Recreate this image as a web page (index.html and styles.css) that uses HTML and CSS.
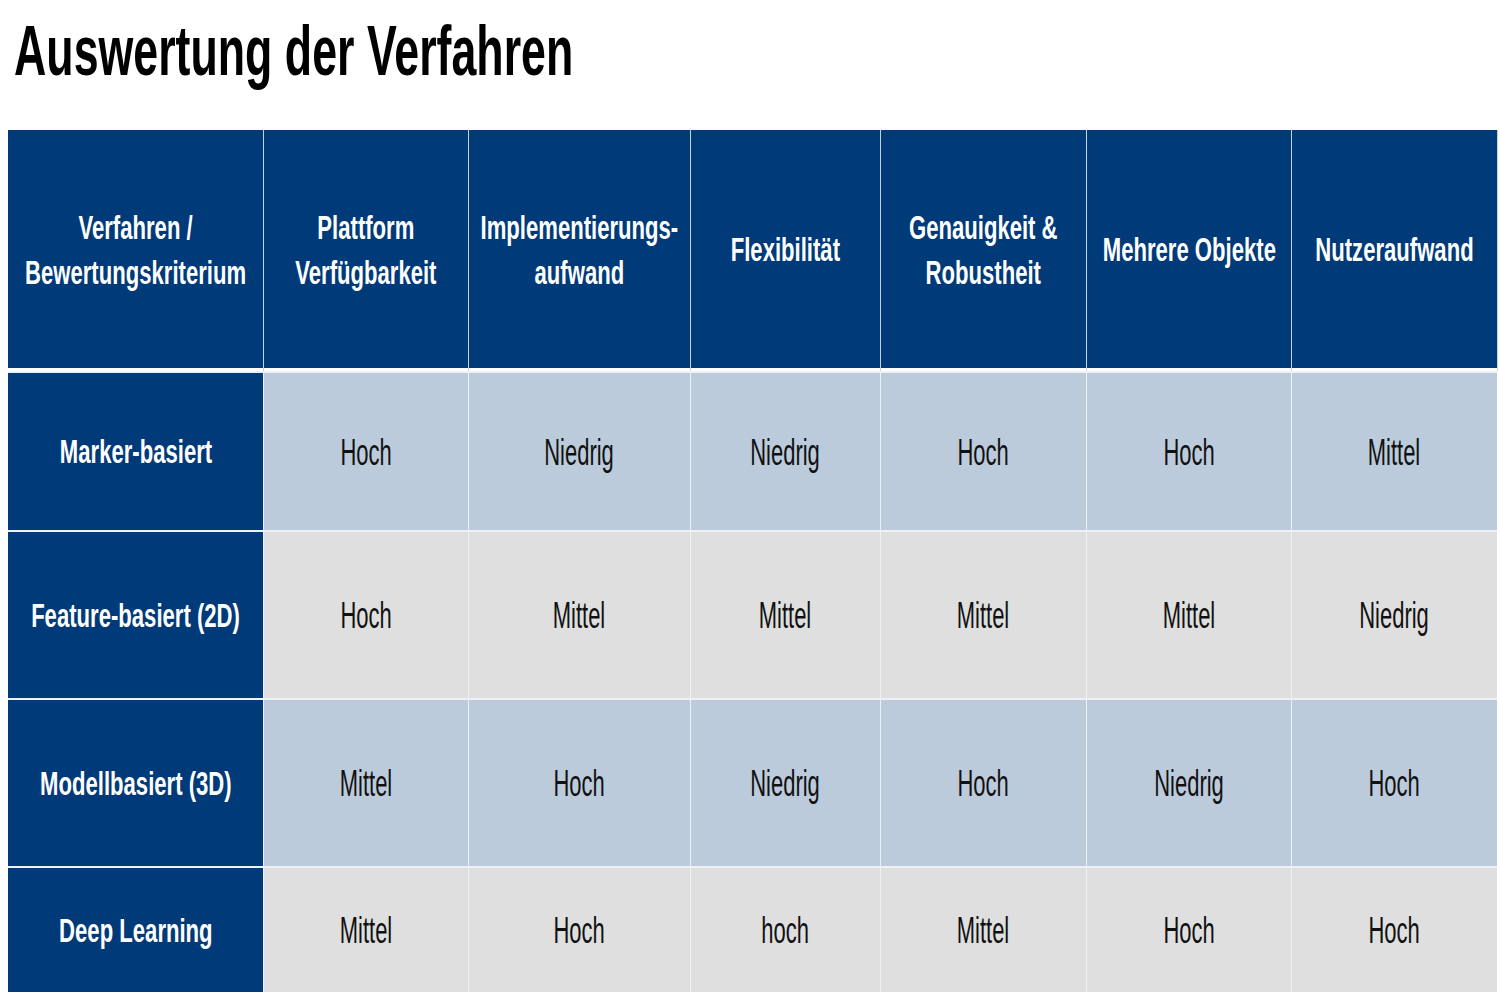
FILE: index.html
```html
<!DOCTYPE html>
<html lang="de">
<head>
<meta charset="utf-8">
<title>Auswertung der Verfahren</title>
<link rel="stylesheet" href="styles.css">
</head>
<body>
<div class="page">
  <h1 class="title"><span>Auswertung der Verfahren</span></h1>
  <div class="grid">
    <div class="cell head"><span>Verfahren /<br>Bewertungskriterium</span></div>
    <div class="cell head"><span>Plattform<br>Verfügbarkeit</span></div>
    <div class="cell head"><span>Implementierungs-<br>aufwand</span></div>
    <div class="cell head"><span>Flexibilität</span></div>
    <div class="cell head"><span>Genauigkeit &amp;<br>Robustheit</span></div>
    <div class="cell head"><span>Mehrere Objekte</span></div>
    <div class="cell head"><span>Nutzeraufwand</span></div>

    <div class="cell rowhead"><span>Marker-basiert</span></div>
    <div class="cell blue"><span>Hoch</span></div>
    <div class="cell blue"><span>Niedrig</span></div>
    <div class="cell blue"><span>Niedrig</span></div>
    <div class="cell blue"><span>Hoch</span></div>
    <div class="cell blue"><span>Hoch</span></div>
    <div class="cell blue"><span>Mittel</span></div>

    <div class="cell rowhead"><span>Feature-basiert (2D)</span></div>
    <div class="cell gray"><span>Hoch</span></div>
    <div class="cell gray"><span>Mittel</span></div>
    <div class="cell gray"><span>Mittel</span></div>
    <div class="cell gray"><span>Mittel</span></div>
    <div class="cell gray"><span>Mittel</span></div>
    <div class="cell gray"><span>Niedrig</span></div>

    <div class="cell rowhead"><span>Modellbasiert (3D)</span></div>
    <div class="cell blue"><span>Mittel</span></div>
    <div class="cell blue"><span>Hoch</span></div>
    <div class="cell blue"><span>Niedrig</span></div>
    <div class="cell blue"><span>Hoch</span></div>
    <div class="cell blue"><span>Niedrig</span></div>
    <div class="cell blue"><span>Hoch</span></div>

    <div class="cell rowhead"><span>Deep Learning</span></div>
    <div class="cell gray"><span>Mittel</span></div>
    <div class="cell gray"><span>Hoch</span></div>
    <div class="cell gray"><span>hoch</span></div>
    <div class="cell gray"><span>Mittel</span></div>
    <div class="cell gray"><span>Hoch</span></div>
    <div class="cell gray"><span>Hoch</span></div>
  </div>
</div>
</body>
</html>
```

FILE: styles.css
```css
html, body {
  margin: 0;
  padding: 0;
  background: #ffffff;
  overflow: hidden;
}

.page {
  padding: 11px 3px 0 8px;
  font-family: "Liberation Sans", Arial, sans-serif;
}

.title {
  margin: 0 0 39px 6px;
  font-size: 70px;
  line-height: 80px;
  font-weight: bold;
  color: #000000;
  height: 80px;
}

.title span {
  display: inline-block;
  white-space: nowrap;
  transform: scaleX(0.639);
  transform-origin: left center;
}

.grid {
  display: grid;
  grid-template-columns: 255px 204px 221px 189px 205px 204px 205px;
  grid-template-rows: 241px 157px 166px 166px 124px;
  column-gap: 1px;
  row-gap: 2px;
  width: 1489px;
  background: #eef1f5;
}

.cell {
  display: flex;
  align-items: center;
  justify-content: center;
  text-align: center;
  white-space: nowrap;
  min-width: 0;
}

.cell span {
  display: inline-block;
  transform-origin: center center;
}

.head {
  background: #003a78;
  color: #ffffff;
  font-weight: bold;
  font-size: 32.5px;
  line-height: 45px;
  border-bottom: 3px solid #ffffff;
  padding-top: 3px;
  box-shadow: 1px 0 0 #c8d3e2;
}

.head span {
  transform: scaleX(0.68);
}

.rowhead {
  background: #003a78;
  color: #ffffff;
  font-weight: bold;
  font-size: 32.5px;
  line-height: 40px;
  padding-top: 1px;
}

.rowhead span {
  transform: scaleX(0.68);
}

.blue,
.gray {
  color: #111111;
  font-size: 36px;
  line-height: 40px;
  padding-top: 2px;
}

.blue {
  background: #bccbdb;
}

.gray {
  background: #dfdfdf;
}

.blue span,
.gray span {
  transform: scaleX(0.61);
}
```
